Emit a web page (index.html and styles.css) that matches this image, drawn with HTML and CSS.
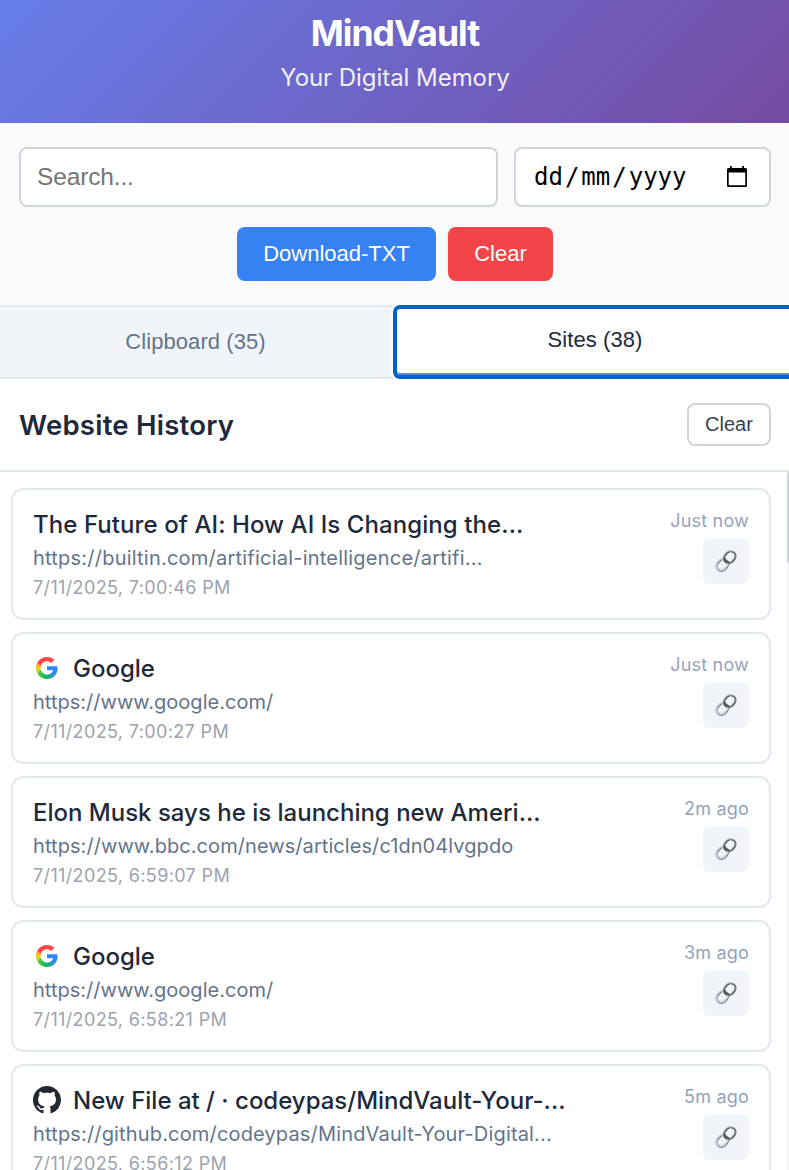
FILE: index.html
```html
<!DOCTYPE html>
<html lang="en">
<head>
<meta charset="utf-8">
<title>MindVault</title>
<link rel="stylesheet" href="styles.css">
</head>
<body>
<svg class="defs" aria-hidden="true">
  <symbol id="link" viewBox="0 0 24 24">
    <g fill="none" stroke-linecap="round">
      <rect x="-6.200" y="-4.800" width="12.400" height="9.600" rx="4.800" transform="translate(15.700 8.300) rotate(-47)" stroke="#59555c" stroke-width="2.100"/>
      <rect x="-6.200" y="-4.800" width="12.400" height="9.600" rx="4.800" transform="translate(15.300 8) rotate(-47)" stroke="#a3b1bd" stroke-width=".8"/>
      <rect x="-6.200" y="-4.800" width="12.400" height="9.600" rx="4.800" transform="translate(8.400 16) rotate(-47)" stroke="#6d6a70" stroke-width="2"/>
      <rect x="-6.200" y="-4.800" width="12.400" height="9.600" rx="4.800" transform="translate(8.200 15.700) rotate(-47)" stroke="#bfd2de" stroke-width="1.200"/>
      <path d="M10.500 9c.2 2.300 1.800 4 4 4.200" stroke="#4e4b52" stroke-width="1.900"/>
    </g>
  </symbol>
  <symbol id="github" viewBox="0 0 16 16">
    <path fill="#24292f" d="M8 0C3.58 0 0 3.58 0 8c0 3.54 2.29 6.53 5.47 7.59.4.07.55-.17.55-.38 0-.19-.01-.82-.01-1.49-2.01.37-2.53-.49-2.69-.94-.09-.23-.48-.94-.82-1.13-.28-.15-.68-.52-.01-.53.63-.01 1.08.58 1.23.82.72 1.21 1.87.87 2.33.66.07-.52.28-.87.51-1.07-1.78-.2-3.64-.89-3.64-3.95 0-.87.31-1.59.82-2.15-.08-.2-.36-1.02.08-2.12 0 0 .67-.21 2.2.82.64-.18 1.32-.27 2-.27s1.36.09 2 .27c1.53-1.04 2.2-.82 2.2-.82.44 1.1.16 1.92.08 2.12.51.56.82 1.27.82 2.15 0 3.07-1.87 3.75-3.65 3.95.29.25.54.73.54 1.48 0 1.07-.01 1.93-.01 2.2 0 .21.15.46.55.38A8.01 8.01 0 0 0 16 8c0-4.42-3.58-8-8-8z"/>
  </symbol>
  <symbol id="google" viewBox="0 0 48 48">
    <path fill="#ff4641" d="M24 9.5c3.54 0 6.71 1.22 9.21 3.6l6.85-6.85C35.9 2.38 30.47 0 24 0 14.62 0 6.51 5.38 2.56 13.22l7.98 6.19C12.43 13.72 17.74 9.5 24 9.5z"/>
    <path fill="#3186ff" d="M46.98 24.55c0-1.57-.15-3.09-.38-4.55H24v9.02h12.94c-.58 2.96-2.26 5.48-4.78 7.18l7.73 6c4.51-4.18 7.09-10.36 7.09-17.65z"/>
    <path fill="url(#g-left)" d="M10.53 28.59c-.48-1.45-.76-2.99-.76-4.59s.27-3.14.76-4.59l-7.98-6.19C.92 16.46 0 20.12 0 24c0 3.88.92 7.54 2.56 10.78l7.97-6.19z"/>
    <path fill="url(#g-bottom)" d="M24 48c6.48 0 11.93-2.13 15.89-5.81l-7.73-6c-2.15 1.45-4.92 2.3-8.16 2.3-6.26 0-11.57-4.22-13.47-9.91l-7.98 6.19C6.51 42.62 14.62 48 24 48z"/>
  </symbol>
  <linearGradient id="g-left" x1="0" y1="0" x2="0" y2="1"><stop offset="0" stop-color="#ff7a28"/><stop offset=".5" stop-color="#ffcf16"/><stop offset="1" stop-color="#a3cb25"/></linearGradient>
  <linearGradient id="g-bottom" x1="0" y1="0" x2="1" y2="0"><stop offset="0" stop-color="#7fca35"/><stop offset=".45" stop-color="#0ebc5f"/><stop offset=".75" stop-color="#18a99a"/><stop offset="1" stop-color="#3186ff"/></linearGradient>
</svg>

<header class="header">
  <h1 class="brand"><span>MindVault</span></h1>
  <p class="tagline"><span>Your Digital Memory</span></p>
</header>

<section class="controls">
  <div class="filters">
    <div class="field search"><span>Search...</span></div>
    <div class="field date">
      <span class="date-text"><i>dd</i><b>/</b><i>mm</i><b>/</b><i>yyyy</i></span>
      <svg class="calendar" viewBox="0 0 20 22"><path fill="#000" fill-rule="evenodd" d="M3 0h1.800v2h10.400V0H17v2h1.500Q20 2 20 3.500v16q0 1.500-1.500 1.500h-17Q0 21 0 19.500v-16Q0 2 1.500 2H3zM1.700 6.500v12.800h16.600V6.500z"/></svg>
    </div>
  </div>
  <div class="actions">
    <button class="btn download"><span>Download-TXT</span></button>
    <button class="btn wipe"><span>Clear</span></button>
  </div>
</section>

<nav class="tabs">
  <button class="tab"><span>Clipboard (35)</span></button>
  <button class="tab active"><span>Sites (38)</span></button>
</nav>

<div class="section-head">
  <h2 class="section-title"><span>Website History</span></h2>
  <button class="clear"><span>Clear</span></button>
</div>

<main class="history">
  <div class="list">
    <article class="card">
      <div class="info">
        <h3 class="title loose"><span>The Future of AI: How AI Is Changing the...</span></h3>
        <p class="url loose"><span>https://builtin.com/artificial-intelligence/artifi...</span></p>
        <p class="stamp"><span>7/11/2025, 7:00:46 PM</span></p>
      </div>
      <div class="side"><span class="ago">Just now</span><button class="open"><svg><use href="#link"/></svg></button></div>
    </article>
    <article class="card">
      <div class="info">
        <h3 class="title"><svg class="favicon google"><use href="#google"/></svg><span>Google</span></h3>
        <p class="url tight"><span>https://www.google.com/</span></p>
        <p class="stamp"><span>7/11/2025, 7:00:27 PM</span></p>
      </div>
      <div class="side"><span class="ago">Just now</span><button class="open"><svg><use href="#link"/></svg></button></div>
    </article>
    <article class="card">
      <div class="info">
        <h3 class="title"><span>Elon Musk says he is launching new Ameri...</span></h3>
        <p class="url"><span>https://www.bbc.com/news/articles/c1dn04lvgpdo</span></p>
        <p class="stamp"><span>7/11/2025, 6:59:07 PM</span></p>
      </div>
      <div class="side"><span class="ago">2m ago</span><button class="open"><svg><use href="#link"/></svg></button></div>
    </article>
    <article class="card">
      <div class="info">
        <h3 class="title"><svg class="favicon google"><use href="#google"/></svg><span>Google</span></h3>
        <p class="url tight"><span>https://www.google.com/</span></p>
        <p class="stamp"><span>7/11/2025, 6:58:21 PM</span></p>
      </div>
      <div class="side"><span class="ago">3m ago</span><button class="open"><svg><use href="#link"/></svg></button></div>
    </article>
    <article class="card">
      <div class="info">
        <h3 class="title"><svg class="favicon"><use href="#github"/></svg><span>New File at / · codeypas/MindVault-Your-...</span></h3>
        <p class="url mid"><span>https://github.com/codeypas/MindVault-Your-Digital...</span></p>
        <p class="stamp"><span>7/11/2025, 6:56:12 PM</span></p>
      </div>
      <div class="side"><span class="ago">5m ago</span><button class="open"><svg><use href="#link"/></svg></button></div>
    </article>
  </div>
  <div class="scrollbar"><div class="thumb"></div></div>
</main>
</body>
</html>
```

FILE: styles.css
```css
* { box-sizing: border-box; }
html, body { height: 100%; }
body {
  margin: 0;
  display: flex;
  flex-direction: column;
  overflow: hidden;
  background: #fff;
  color: #1e293b;
  font-family: Inter, "Noto Sans", sans-serif;
}
h1, h2, h3, p { margin: 0; }
button { font-family: "Liberation Sans", Arial, sans-serif; border: 0; padding: 0; margin: 0; }
.defs { position: absolute; width: 0; height: 0; }

.header {
  flex: none;
  height: 123px;
  padding-top: 12px;
  text-align: center;
  color: #fff;
  background: linear-gradient(135deg, #667eea 0%, #764ba2 100%);
}
.brand { font-size: 35.500px; font-weight: 700; line-height: 44px; letter-spacing: -1px; padding-left: 1px; }
.tagline { font-size: 24px; line-height: 30px; margin-top: 7px; padding-left: 1px; opacity: .9; letter-spacing: -.05px; }

.controls { flex: none; height: 182px; padding: 24px 18px 0 19px; background: #f8fafc; }
.filters { display: flex; gap: 16px; }
.field {
  display: flex;
  align-items: center;
  height: 60px;
  border: 2px solid #d1d5db;
  border-radius: 8px;
  background: #fff;
}
.search { flex: 1; padding: 0 0 1px 16px; color: #757575; font: 24.5px "Liberation Sans", Arial, sans-serif; letter-spacing: -.15px; }
.date { width: 257px; padding: 0 22px 0 18px; justify-content: space-between; color: #000; }
.date-text { display: flex; font: 24px "DejaVu Sans Mono", monospace; }
.date-text i, .date-text b { font-style: normal; font-weight: 400; }
.date-text b { margin: 0 2px; }
.calendar { width: 20px; height: 22px; }
.actions { display: flex; justify-content: center; gap: 12px; margin-top: 20px; }
.btn { height: 54px; border-radius: 8px; color: #fff; font-size: 22px; }
.download { width: 199px; background: #3782f3; }
.wipe { width: 105px; background: #f24547; }

.tabs {
  flex: none;
  display: flex;
  height: 74px;
  border-top: 2px solid #e2e8f0;
  border-bottom: 2px solid #e2e8f0;
  background: #f1f5f9;
}
.tab { flex: none; width: 391px; background: transparent; color: #64748b; font-size: 22px; letter-spacing: .08px; }
.tab.active {
  width: 404px;
  margin: -2px 0 -2px 2px;
  padding-bottom: 4px;
  position: relative;
  background: #fff;
  color: #1e293b;
  border: 4px solid #0060d0;
  border-radius: 7px;
  box-shadow: inset 0 -2px #667eea, 0 0 0 2px #fff;
}

.section-head {
  flex: none;
  display: flex;
  align-items: center;
  justify-content: space-between;
  height: 93px;
  padding: 0 18px 0 19px;
  border-bottom: 2px solid #e2e8f0;
}
.section-title { font-size: 27.500px; font-weight: 600; letter-spacing: .25px; padding-top: 1px; }
.clear {
  width: 84px;
  height: 43px;
  border: 2px solid #d1d5db;
  border-radius: 8px;
  background: #fff;
  color: #374151;
  font-size: 20px;
}

.history { flex: 1; min-height: 0; display: flex; overflow: hidden; }
.list { flex: 1; padding: 16px 16px 0 11px; display: flex; flex-direction: column; gap: 12px; }
.card {
  flex: none;
  display: flex;
  justify-content: space-between;
  height: 132px;
  padding: 17px 20px;
  border: 2px solid #e2e8f0;
  border-radius: 12px;
}
.title { display: flex; align-items: center; gap: 12px; height: 34px; font-size: 24px; font-weight: 500; white-space: nowrap; }
.title.loose { letter-spacing: .08px; }
.favicon { width: 28px; height: 28px; }
.favicon.google { padding: 3px; }
.url { font-size: 20px; line-height: 30px; margin-top: 2px; color: #64748b; letter-spacing: .07px; white-space: nowrap; }
.url.loose { letter-spacing: .22px; }
.url.mid { letter-spacing: .16px; }
.url.tight { letter-spacing: .02px; }
.stamp { font-size: 18px; line-height: 28px; margin-top: 1px; color: #9ca3af; letter-spacing: .36px; }
.side { display: flex; flex-direction: column; align-items: flex-end; }
.ago { font-size: 18px; line-height: 24px; margin-top: 2px; color: #94a3b8; letter-spacing: .2px; }
.open {
  display: flex;
  align-items: center;
  justify-content: center;
  width: 46px;
  height: 45px;
  margin-top: 6px;
  padding-bottom: 1px;
  border-radius: 6px;
  background: #f1f5f9;
}
.open svg { width: 24px; height: 24px; }
.scrollbar { width: 2px; background: #f1f5f9; }
.thumb { height: 91px; background: #cbd5e1; border-radius: 2px 0 0 2px; }
```
